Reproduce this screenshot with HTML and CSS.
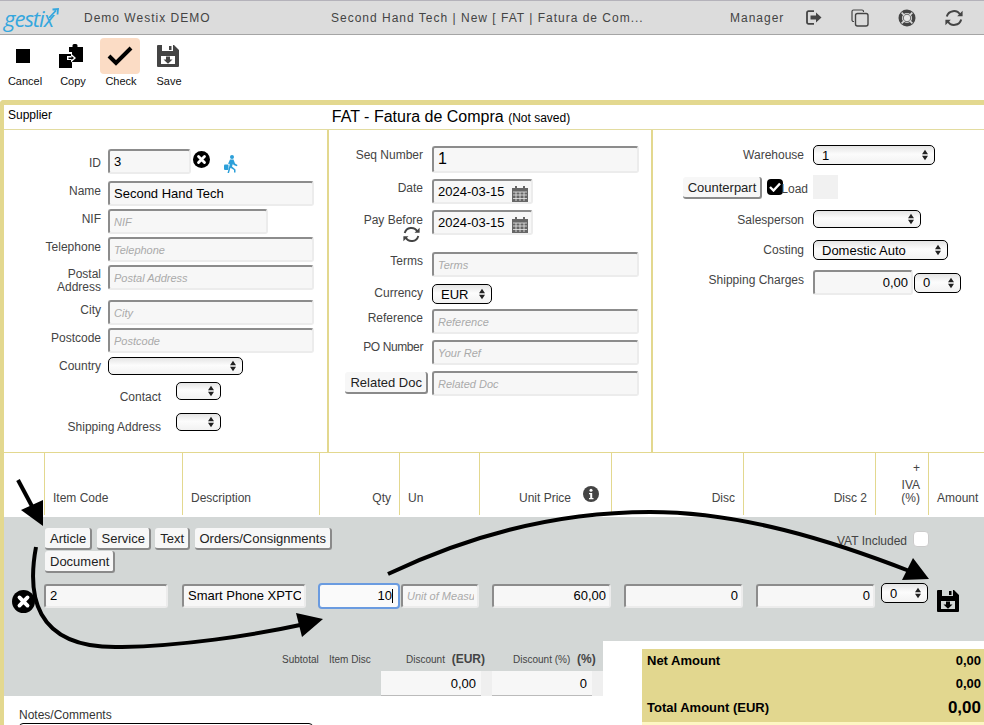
FILE: index.html
```html
<!doctype html>
<html lang="en">
  <head>
    <meta charset="UTF-8" />
    <meta name="viewport" content="width=device-width, initial-scale=1.0" />
    <title>Gestix - Fatura de Compra</title>
    <link rel="stylesheet" href="styles.css">
  </head>
  <body>
    <svg class="defs" width="0" height="0">
      <symbol id="i-refresh" viewBox="0 0 18 18">
        <path d="M15.200 5.800A7.300 7.300 0 0 0 1.800 7.500M2.800 12.200A7.300 7.300 0 0 0 16.200 10.500" fill="none" stroke="currentColor" stroke-width="2"/>
        <path d="M17.600 1.800v5.400h-5.400zM.4 16.200v-5.400h5.400z" fill="currentColor"/>
      </symbol>
      <symbol id="i-save" viewBox="0 0 22 22">
        <path fill-rule="evenodd" fill="currentColor" d="M0 1a1 1 0 0 1 1-1h16l5 5v16a1 1 0 0 1-1 1H1a1 1 0 0 1-1-1zM5 0v6h11V0zM4 11v8h14v-8z"/>
        <path fill="currentColor" d="M9 11.500h4v3h2.500L11 18.800 6.500 14.500H9zM12 1h2.500v4H12z"/>
      </symbol>
      <symbol id="i-close" viewBox="0 0 24 24">
        <circle cx="12" cy="12" r="12" fill="currentColor"/>
        <path d="M7.800 7.800l8.400 8.400M16.200 7.800l-8.400 8.400" stroke="#fff" stroke-width="4" stroke-linecap="round"/>
      </symbol>
      <symbol id="i-updown" viewBox="0 0 8 14">
        <path d="M4 1l3.500 5h-7zM4 13L.5 8h7z" fill="currentColor"/>
      </symbol>
      <symbol id="i-calendar" viewBox="0 0 16 16">
        <path fill="#666" d="M3 0h2v2h6V0h2v2h3v14H0V2h3z"/>
        <path stroke="#e8e8e8" stroke-width=".8" fill="none" d="M1 6h14M1 9h14M1 12.500h14M4 6v9M8 6v9M12 6v9"/>
      </symbol>
    </svg>

    <div class="topbar">
      <div class="logo">
        <span class="logo-text">gestix</span>
        <svg class="logo-arrow" width="10" height="10" viewBox="0 0 10 10"><path d="M0 10L7 2.500M3.500 1.500L9 1l-.5 5.500" fill="none" stroke="#35a7de" stroke-width="1.800"/></svg>
      </div>
      <div class="top-company">Demo Westix DEMO</div>
      <div class="top-title">Second Hand Tech | New [ FAT | Fatura de Com...</div>
      <div class="top-user">Manager</div>
      <div class="top-icons">
        <svg width="16" height="15" viewBox="0 0 16 15"><path d="M8 1.200H2.500A1.500 1.500 0 0 0 1 2.700v9.600a1.500 1.500 0 0 0 1.500 1.500H8" fill="none" stroke="#444" stroke-width="1.800"/><path d="M4.500 5.500h5.500V2.500L15.500 7.500 10 12.500v-3H4.500z" fill="#444"/></svg>
        <svg width="18" height="18" viewBox="0 0 18 18"><path d="M3 12.500H2.500A1.500 1.500 0 0 1 1 11V2.500A1.500 1.500 0 0 1 2.500 1H11a1.500 1.500 0 0 1 1.500 1.500V3" fill="none" stroke="#444" stroke-width="1.200"/><rect x="4.500" y="4.500" width="12.500" height="12.500" rx="2" fill="none" stroke="#444" stroke-width="1.400"/></svg>
        <svg width="18" height="18" viewBox="0 0 18 18"><circle cx="9" cy="9" r="6.800" fill="none" stroke="#444" stroke-width="3.400"/><circle cx="9" cy="9" r="3.800" fill="#e6e6e6" stroke="#444" stroke-width=".8"/><path d="M3.600 3.600l2.800 2.800M14.400 3.600l-2.800 2.800M3.600 14.400l2.800-2.800M14.400 14.400l-2.800-2.800" stroke="#dcdcdc" stroke-width="1.500"/></svg>
        <svg class="icon-refresh" width="18" height="18"><use href="#i-refresh"/></svg>
      </div>
    </div>

    <div class="toolbar">
      <button class="tool">
        <span class="tool-icon"><span class="stop"></span></span>
        <span>Cancel</span>
      </button>
      <button class="tool">
        <span class="tool-icon">
          <svg class="icon-copy" width="24" height="24" viewBox="0 0 24 24"><path d="M0 10h13v14H0z"/><path d="M10 3h3.500V1.500A1.500 1.500 0 0 1 15 0h2a1.500 1.500 0 0 1 1.500 1.500V3H24v15H13V8h-3z"/><path d="M8 12h4V9.500l5 4.500-5 4.500V16H8z" fill="#fff"/><path d="M9.500 13.500h3V12l2.500 2-2.500 2v-1h-3z"/></svg>
        </span>
        <span>Copy</span>
      </button>
      <button class="tool tool-active">
        <span class="tool-icon">
          <svg width="26" height="22" viewBox="0 0 26 22"><path d="M2 11l7 7L24 3" fill="none" stroke="#000" stroke-width="4"/></svg>
        </span>
        <span>Check</span>
      </button>
      <button class="tool">
        <span class="tool-icon"><svg class="icon-save" width="22" height="22"><use href="#i-save"/></svg></span>
        <span>Save</span>
      </button>
    </div>

    <div class="card">
      <div class="card-head">
        <span class="card-tag">Supplier</span>
        <span class="card-title">FAT - Fatura de Compra <small>(Not saved)</small></span>
      </div>

      <div class="columns">
        <div class="form form-supplier">
          <label class="lbl lbl-mid">ID</label>
          <div class="field-inline">
            <input class="inp w-83" value="3" />
            <svg class="icon-close" width="17" height="17"><use href="#i-close"/></svg>
            <svg class="icon-walk" width="14" height="18" viewBox="0 0 14 18"><circle cx="8" cy="2" r="2" fill="#2b9fd9"/><path d="M6 4.500h3.500l1.500 4 2.500 1.500-.6 1.200L9.500 10l-.5-1.500-1 3 3.500 3v3H10v-2.500L6.500 12.800 5 18H3.500L6 8.500 5 9.500 4.200 8.500z" fill="#2b9fd9"/><rect x="0" y="9.500" width="4.500" height="5.500" rx="1" fill="#2b9fd9"/></svg>
          </div>
          <label class="lbl">Name</label>
          <input class="inp w-206" value="Second Hand Tech" />
          <label class="lbl">NIF</label>
          <input class="inp w-160" placeholder="NIF" />
          <label class="lbl">Telephone</label>
          <input class="inp w-206" placeholder="Telephone" />
          <label class="lbl lbl-two">Postal<br>Address</label>
          <input class="inp w-206" placeholder="Postal Address" />
          <label class="lbl">City</label>
          <input class="inp w-206" placeholder="City" />
          <label class="lbl">Postcode</label>
          <input class="inp w-206" placeholder="Postcode" />
          <label class="lbl lbl-up">Country</label>
          <div class="sel w-135 h-18"><select><option></option></select><svg width="8" height="12"><use href="#i-updown"/></svg></div>
          <div class="row-wide">
            <label class="lbl lbl-wide">Contact</label>
            <div class="sel w-45 h-18"><select><option></option></select><svg width="8" height="12"><use href="#i-updown"/></svg></div>
          </div>
          <div class="row-wide">
            <label class="lbl lbl-wide lbl-wide-up">Shipping Address</label>
            <div class="sel w-45 h-18"><select><option></option></select><svg width="8" height="12"><use href="#i-updown"/></svg></div>
          </div>
        </div>

        <div class="form form-doc">
          <label class="lbl">Seq Number</label>
          <input class="inp w-207 inp-big" value="1" />
          <label class="lbl">Date</label>
          <div class="date"><input class="inp w-101" value="2024-03-15" /><svg width="16" height="16"><use href="#i-calendar"/></svg></div>
          <div class="lbl lbl-stack">Pay Before<svg class="icon-refresh" width="17" height="17"><use href="#i-refresh"/></svg></div>
          <div class="date"><input class="inp w-101" value="2024-03-15" /><svg width="16" height="16"><use href="#i-calendar"/></svg></div>
          <label class="lbl">Terms</label>
          <input class="inp w-207" placeholder="Terms" />
          <label class="lbl lbl-up">Currency</label>
          <div class="sel w-60 h-20"><select><option>EUR</option></select><svg width="8" height="12"><use href="#i-updown"/></svg></div>
          <label class="lbl">Reference</label>
          <input class="inp w-207" placeholder="Reference" />
          <label class="lbl lbl-po">PO Number</label>
          <input class="inp w-207" placeholder="Your Ref" />
          <div class="lbl-btn"><button class="btn">Related Doc</button></div>
          <input class="inp w-207" placeholder="Related Doc" />
        </div>

        <div class="form form-extra">
          <label class="lbl lbl-sel">Warehouse</label>
          <div class="sel w-122 h-20"><select><option>1</option></select><svg width="8" height="12"><use href="#i-updown"/></svg></div>
          <div class="counterpart">
            <button class="btn">Counterpart</button>
            <span class="check"><svg width="12" height="10" viewBox="0 0 12 10"><path d="M1 5l3.500 3.500L11 1.500" fill="none" stroke="#fff" stroke-width="2.400"/></svg></span>
            <span class="load">Load</span>
          </div>
          <div class="swatch"></div>
          <label class="lbl lbl-sel">Salesperson</label>
          <div class="sel w-108 h-18"><select><option></option></select><svg width="8" height="12"><use href="#i-updown"/></svg></div>
          <label class="lbl lbl-sel">Costing</label>
          <div class="sel w-135 h-20"><select><option>Domestic Auto</option></select><svg width="8" height="12"><use href="#i-updown"/></svg></div>
          <label class="lbl lbl-sel">Shipping Charges</label>
          <div class="field-charges">
            <input class="inp w-100 num" value="0,00" />
            <div class="sel w-47 h-20"><select><option>0</option></select><svg width="8" height="12"><use href="#i-updown"/></svg></div>
          </div>
        </div>
      </div>

      <div class="grid-cols table-head">
        <div></div>
        <div class="th">Item Code</div>
        <div class="th">Description</div>
        <div class="th th-r">Qty</div>
        <div class="th">Un</div>
        <div class="th th-r th-price">Unit Price
          <svg width="16" height="16" viewBox="0 0 16 16"><circle cx="8" cy="8" r="8" fill="#444"/><circle cx="8" cy="4.200" r="1.500" fill="#fff"/><path d="M6 7h3.200v5H10.500v1.300H6V12h1.200V8.300H6z" fill="#fff"/></svg>
        </div>
        <div class="th th-r">Disc</div>
        <div class="th th-r">Disc 2</div>
        <div class="th th-iva"><span class="iva-plus">+</span><span>IVA</span><span>(%)</span></div>
        <div class="th">Amount</div>
      </div>

      <div class="line-edit">
        <div class="line-tabs">
          <div class="tabs">
            <button class="btn">Article</button>
            <button class="btn">Service</button>
            <button class="btn">Text</button>
            <button class="btn">Orders/Consignments</button>
            <button class="btn">Document</button>
          </div>
          <div class="vat">VAT Included <span class="check-empty"></span></div>
        </div>
        <div class="grid-cols line-fields">
          <svg class="icon-close line-del" width="23" height="23"><use href="#i-close"/></svg>
          <input class="inp w-124" value="2" />
          <input class="inp w-124" value="Smart Phone XPTC" />
          <div class="qty"><input class="inp inp-focus num" value="10" /><span class="caret"></span></div>
          <input class="inp inp-un" placeholder="Unit of Measure" />
          <input class="inp inp-money num" value="60,00" />
          <input class="inp inp-money num" value="0" />
          <input class="inp inp-money num" value="0" />
          <div class="sel w-47 h-20 line-iva"><select><option>0</option></select><svg width="8" height="12"><use href="#i-updown"/></svg></div>
          <svg class="icon-black line-save" width="22" height="22"><use href="#i-save"/></svg>
        </div>
      </div>

      <div class="foot">
        <div class="foot-left">
          <div class="sums">
            <span></span>
            <span class="sum-l">Subtotal</span>
            <span class="sum-l">Item Disc</span>
            <span class="sum-l sum-end">Discount <b>(EUR)</b></span>
            <span class="sum-l sum-end sum-pct">Discount (%) <b>(%)</b></span>
            <span></span>
            <span></span>
            <span></span>
            <span class="sum-cell"><input class="inp-flat num" value="0,00" /></span>
            <span class="sum-cell"><input class="inp-flat num" value="0" /></span>
          </div>
          <div class="notes">
            <label>Notes/Comments</label>
            <div class="notes-box"></div>
          </div>
        </div>
        <div class="totals">
          <div class="total-row"><span>Net Amount</span><span>0,00</span></div>
          <div class="total-row"><span></span><span>0,00</span></div>
          <div class="total-row total-main"><span>Total Amount (EUR)</span><span class="total-value">0,00</span></div>
        </div>
      </div>
    </div>

    <!-- hand drawn annotation arrows on top of the screenshot -->
    <svg class="arrows" width="984" height="725" viewBox="0 0 984 725">
      <g fill="none" stroke="#000">
        <path d="M18 480L34 510" stroke-width="4"/>
        <path d="M36 547C28 590 30 650 122 647C180 646 250 636 305 624" stroke-width="4"/>
        <path d="M388 574C470 535 560 512 650 512C740 512 830 540 912 572" stroke-width="4"/>
      </g>
      <path d="M43 526L21 510L43 500zM323 619L296 613L302 637zM929 579L902 580L913 558z"/>
    </svg>
  </body>
</html>
```

FILE: styles.css
```css
* {
  box-sizing: border-box;
}

html,
body {
  margin: 0;
  padding: 0;
  height: 725px;
  overflow: hidden;
}

body {
  position: relative;
  font-family: 'Liberation Sans', Arial, sans-serif;
  font-size: 12px;
  color: #444;
  background: #fff;
}

.defs {
  position: absolute;
}

/* top bar */
.topbar {
  display: flex;
  align-items: center;
  height: 35px;
  background: #dcdcdc;
  border-top: 1px solid #b4b2ba;
  border-bottom: 1px solid #a5a5a5;
  letter-spacing: 1px;
  color: #444;
}

.logo {
  position: relative;
  width: 84px;
  padding-left: 4px;
}

.logo-text {
  font-family: 'Open Sans', sans-serif;
  font-style: italic;
  font-weight: 500;
  font-size: 22px;
  letter-spacing: -1px;
  color: #35a7de;
  line-height: 26px;
  display: block;
}

.logo-arrow {
  position: absolute;
  left: 49px;
  top: 3px;
}

.top-company {
  width: 247px;
}

.top-title {
  width: 399px;
  white-space: nowrap;
}

.top-user {
  width: 76px;
}

.top-icons {
  display: flex;
  align-items: center;
  gap: 29px;
}

.icon-refresh {
  color: #444;
}

/* toolbar */
.toolbar {
  display: flex;
  height: 65px;
  padding: 3px 0 0 1px;
}

.tool {
  width: 48px;
  height: 55px;
  border: none;
  background: none;
  padding: 0;
  font: 11px 'Liberation Sans', Arial, sans-serif;
  color: #111;
  display: flex;
  flex-direction: column;
  align-items: center;
}

.tool-icon {
  width: 40px;
  height: 36px;
  margin-right: 2px;
  border-radius: 4px;
  display: flex;
  align-items: center;
  justify-content: center;
  margin-bottom: 1px;
}

.tool-active .tool-icon {
  background: #fbdcc5;
}

.stop {
  width: 14px;
  height: 14px;
  margin-right: 3px;
  background: #000;
}

.icon-copy {
  margin-right: 2px;
}

.icon-save {
  color: #444;
}

/* main card */
.card {
  border-top: 5px solid #e3d88f;
  border-left: 4px solid #e3d88f;
  border-top-left-radius: 4px;
}

.card-head {
  height: 25px;
  border-bottom: 1px solid #e3dca0;
  display: flex;
  position: relative;
  justify-content: center;
  align-items: center;
  padding-right: 86px;
  color: #000;
}

.card-tag {
  position: absolute;
  left: 4px;
  top: 3px;
}

.card-title {
  font-size: 16px;
}

.card-title small {
  font-size: 12px;
}

.columns {
  display: grid;
  grid-template-columns: 325px 324px 331px;
  height: 323px;
  border-bottom: 1px solid #e3d88f;
}

.form {
  display: grid;
  align-content: start;
  border-right: 2px solid #e3d88f;
}

.form-supplier {
  grid-template-columns: 97px auto;
  grid-template-rows: 32px 28px 28px 28px 35px 28px 29px 25px 31px 20px;
  column-gap: 7px;
  padding-top: 19px;
}

.form-doc {
  grid-template-columns: 94px auto;
  grid-template-rows: 33px 31px 42px 32px 25px 31px 31px 31px;
  column-gap: 9px;
  padding-top: 16px;
}

.form-extra {
  grid-template-columns: 151px auto;
  grid-template-rows: 30px 35px 30px 30px 25px;
  column-gap: 9px;
  padding-top: 15px;
  border-right: none;
}

.lbl {
  text-align: right;
  line-height: 14px;
  padding-top: 2px;
  color: #444;
}

.form-supplier .lbl {
  padding-top: 3px;
}

.form-supplier .lbl-mid {
  padding-top: 7px;
}

.form-supplier .lbl-two {
  line-height: 13px;
  padding-top: 3px;
}

.form-supplier .lbl-up,
.form-doc .lbl-up {
  padding-top: 2px;
}

.lbl-sel {
  padding-top: 3px;
}

.lbl-po {
  margin-top: -2px;
  letter-spacing: -0.4px;
}

.lbl-stack {
  display: flex;
  flex-direction: column;
  align-items: flex-end;
  padding-top: 3px;
}

.lbl-stack svg {
  margin: -1px 3px 0 0;
}

.lbl-btn {
  display: flex;
  justify-content: flex-end;
  padding: 1px 0 0 0;
  margin-right: -5px;
}

.row-wide {
  grid-column: 1 / -1;
  display: flex;
  gap: 15px;
}

.form-supplier .lbl-wide {
  width: 157px;
  padding-top: 8px;
}

.form-supplier .lbl-wide-up {
  padding-top: 7px;
}

.field-inline {
  display: flex;
  align-items: flex-start;
}

.inp {
  display: block;
  height: 25px;
  background: #f7f7f7;
  border-style: solid;
  border-width: 2px;
  border-color: #8c8c8c #ececec #ececec #8c8c8c;
  border-radius: 3px;
  padding: 0 4px 1px;
  font: 13px 'Liberation Sans', Arial, sans-serif;
  color: #000;
  outline: none;
}

.inp::placeholder {
  font-size: 11px;
  font-style: italic;
  color: #aaa;
}

.inp-big {
  height: 27px;
  font-size: 16px;
}

.num {
  text-align: right;
}

.w-83 { width: 83px; }
.w-100 { width: 100px; }
.w-101 { width: 101px; }
.w-124 { width: 124px; }
.w-160 { width: 160px; }
.w-206 { width: 206px; }
.w-207 { width: 207px; }

.icon-close {
  color: #000;
  margin: 2px 0 0 2px;
}

.icon-walk {
  margin: 6px 0 0 14px;
}

.date {
  position: relative;
  width: 101px;
}

.date svg {
  position: absolute;
  right: 5px;
  top: 7px;
}

/* selects */
.sel {
  position: relative;
  color: #000;
}

.sel select {
  appearance: none;
  width: 100%;
  height: 100%;
  display: block;
  border: 1px solid #000;
  border-radius: 5px;
  background: linear-gradient(#e4e4e4, #fcfcfc 45%, #f2f2f2);
  font: 13px 'Liberation Sans', Arial, sans-serif;
  color: #000;
  padding: 0 8px;
}

.sel svg {
  position: absolute;
  right: 6px;
  top: 50%;
  margin-top: -6px;
  color: #222;
}

.w-45 { width: 45px; }
.w-47 { width: 47px; }
.w-60 { width: 60px; }
.w-108 { width: 108px; }
.w-122 { width: 122px; }
.w-135 { width: 135px; }
.h-18 { height: 18px; }
.h-20 { height: 20px; }

.btn {
  height: 22px;
  background: #f7f7f7;
  border-style: solid;
  border-width: 0 2px 2px 0;
  border-color: #8a8a8a;
  border-radius: 3px;
  padding: 0 4px 0 5px;
  font: 13px 'Liberation Sans', Arial, sans-serif;
  color: #222;
  white-space: nowrap;
}

.counterpart {
  display: flex;
  align-items: flex-start;
  justify-content: flex-end;
  padding-top: 2px;
  margin-right: -4px;
}

.check {
  width: 16px;
  height: 16px;
  margin: 2px 0 0 5px;
  border-radius: 4px;
  background: #000;
  display: flex;
  align-items: center;
  justify-content: center;
  flex: none;
}

.load {
  margin: 5px 0 0 -2px;
}

.swatch {
  width: 25px;
  height: 24px;
  background: #f1f1f1;
}

.field-charges {
  display: flex;
  align-items: center;
  gap: 1px;
}

.field-charges .inp {
  padding-right: 3px;
}

/* item table */
.grid-cols {
  display: grid;
  grid-template-columns: 40px 138px 137px 80px 80px 132px 132px 132px 53px 56px;
}

.table-head {
  height: 64px;
  padding-bottom: 2px;
}

.th {
  border-left: 1px solid #e3d88f;
  display: flex;
  align-items: flex-end;
  padding: 0 8px 11px;
  line-height: 12px;
}

.th-r {
  justify-content: flex-end;
  text-align: right;
}

.th-price {
  padding-right: 12px;
  gap: 12px;
}

.th-price svg {
  flex: none;
  margin-bottom: 2px;
}

.th-iva {
  flex-direction: column;
  justify-content: flex-end;
  align-items: flex-end;
  line-height: 13px;
  padding-bottom: 10px;
}

.iva-plus {
  margin-bottom: 4px;
}

.line-edit {
  height: 124px;
  background: #d3d7d6;
}

.line-tabs {
  display: flex;
  justify-content: space-between;
  padding: 11px 55px 0 41px;
  height: 67px;
}

.tabs {
  display: flex;
  flex-wrap: wrap;
  align-content: flex-start;
  gap: 1px 4.4px;
  width: 300px;
}

.vat {
  display: flex;
  align-items: flex-start;
  gap: 6px;
  padding-top: 6px;
}

.check-empty {
  width: 16px;
  height: 16px;
  margin-top: -3px;
  background: #fff;
  border: 1px solid #ccc;
  border-radius: 4px;
}

.line-fields {
  align-items: start;
}

.line-fields .inp {
  height: 24px;
  padding-right: 3px;
}

.line-del {
  margin: 6px 0 0 8px;
}

.qty {
  position: relative;
  width: 82px;
  margin: -1px 0 0 -1px;
}

.line-fields .inp-focus {
  width: 82px;
  height: 26px;
  padding-right: 6px;
  background: #fafafa;
  border: 2px solid #6a9be0;
  border-radius: 4px;
}

.caret {
  position: absolute;
  left: 74px;
  top: 6px;
  width: 1px;
  height: 14px;
  background: #000;
}

.inp-un {
  width: 78px;
  margin-left: 2px;
}

.inp-money {
  width: 119px;
  margin-left: 13px;
}

.line-iva {
  margin: -1px 0 0 6px;
}

.line-save {
  margin: 6px 0 0 9px;
}

.icon-black {
  color: #000;
}

/* footer */
.foot {
  display: flex;
  align-items: flex-start;
}

.foot-left {
  width: 599px;
}

.sums {
  display: grid;
  grid-template-columns: 278px 47px 52px 111px 111px;
  grid-template-rows: 30px 25px;
  background: #d3d7d6;
}

.sum-l {
  font-size: 10px;
  padding-top: 13px;
  color: #444;
}

.sum-end {
  padding: 11px 6px 0 25px;
  white-space: nowrap;
}

.sum-pct {
  padding-left: 21px;
}

.sum-l b {
  font-size: 12px;
  margin-left: 4px;
}

.sum-cell {
  background: #efefef;
}

.inp-flat {
  display: block;
  width: 100px;
  height: 25px;
  border: none;
  border-bottom: 1px solid #bbb;
  background: #f7f7f7;
  font: 13px 'Liberation Sans', Arial, sans-serif;
  color: #000;
  padding: 0 5px;
}

.notes {
  padding: 12px 0 0 15px;
  color: #333;
}

.notes label {
  display: block;
  line-height: 14px;
}

.notes-box {
  width: 294px;
  height: 30px;
  border: 1px solid #000;
  border-radius: 4px;
  margin-top: 1px;
}

.totals {
  width: 342px;
  margin: 8px 0 0 39px;
  padding: 0 3px 0 5px;
  height: 73px;
  background: #e2d78f;
  color: #000;
  font-size: 13px;
  font-weight: bold;
  box-shadow: 0 3px 0 #fdf6c3;
}

.total-row {
  display: flex;
  justify-content: space-between;
  align-items: center;
  height: 23px;
}

.total-main {
  height: 25px;
}

.total-value {
  font-size: 17px;
}

.arrows {
  position: absolute;
  left: 0;
  top: 0;
  pointer-events: none;
}
```
